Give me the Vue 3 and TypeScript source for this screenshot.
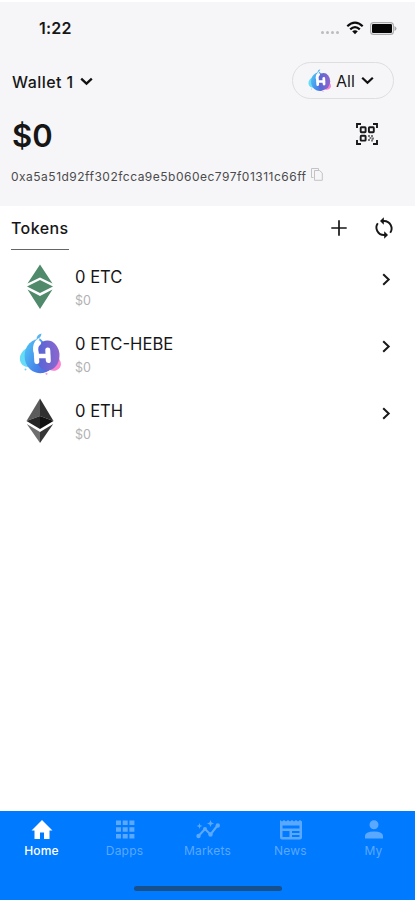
<script setup lang="ts">
import { ref } from 'vue'

interface Token {
  symbol: string
  balance: string
  value: string
  icon: 'etc' | 'hebe' | 'eth'
}

interface Tab {
  key: string
  label: string
}

const address = '0xa5a51d92ff302fcca9e5b060ec797f01311c66ff'

const tokens: Token[] = [
  { symbol: 'ETC', balance: '0', value: '$0', icon: 'etc' },
  { symbol: 'ETC-HEBE', balance: '0', value: '$0', icon: 'hebe' },
  { symbol: 'ETH', balance: '0', value: '$0', icon: 'eth' },
]

const tabs: Tab[] = [
  { key: 'home', label: 'Home' },
  { key: 'dapps', label: 'Dapps' },
  { key: 'markets', label: 'Markets' },
  { key: 'news', label: 'News' },
  { key: 'my', label: 'My' },
]

const active = ref('home')
</script>

<template>
  <div class="screen">
    <svg class="defs" width="0" height="0" aria-hidden="true">
      <defs>
        <linearGradient id="hebeBlue" x1="0" y1="0.3" x2="1" y2="0.8">
          <stop offset="0" stop-color="#4fbdf4" />
          <stop offset="0.5" stop-color="#4586ea" />
          <stop offset="1" stop-color="#5a55cf" />
        </linearGradient>
        <linearGradient id="hebePurple" x1="0" y1="0.5" x2="1" y2="0.5">
          <stop offset="0" stop-color="#4f66d8" />
          <stop offset="1" stop-color="#8d66cc" />
        </linearGradient>
        <symbol id="hebe" viewBox="0 0 42 42">
          <path d="M36 21C43 27 44 34 38 37C34 39 30 37 28 35Z" fill="#fb83d0" />
          <path d="M10 14C2 17 -1 25 2 30C5 35 11 34 14 34Z" fill="#66dcf6" />
          <path d="M21 5.500C9 7 4 17 6 27C8 36 15 41 24 40C33 38 39 31 38 22Z" fill="url(#hebeBlue)" />
          <ellipse cx="28.500" cy="22.500" rx="12" ry="15" fill="url(#hebePurple)" />
          <path d="M17.500 6.500Q17.500 1.500 22.500 .5Q22 5 17.500 6.500Z" fill="#58b4f0" />
          <circle cx="6.500" cy="36.500" r="1" fill="#77d4f4" />
          <circle cx="27.500" cy="40.800" r="1.100" fill="#f4a0dc" />
          <g fill="none" stroke="#fff" stroke-width="5" stroke-linecap="round">
            <path d="M19.500 10Q15.500 13 17.300 20L17.800 28.500" />
            <path d="M28.800 17L29.300 27.500" />
            <path d="M18 23H29" stroke-width="4.500" />
          </g>
          <path d="M20 6Q13.500 10 15.500 19" fill="none" stroke="#fff" stroke-width="1.800" />
        </symbol>
      </defs>
    </svg>

    <header class="header">
      <div class="status">
        <span class="clock">1:22</span>
        <span class="status-icons">
          <span class="signal"><i v-for="n in 4" :key="n"></i></span>
          <svg class="wifi" width="18" height="14" viewBox="0 0 18 14">
            <g fill="none" stroke="#0b0b0c" stroke-width="2.200">
              <path d="M1.300 5.200Q9 -2 16.700 5.200" />
              <path d="M4.200 8.400Q9 4 13.800 8.400" />
            </g>
            <path d="M6.200 10.200Q9 8.200 11.800 10.200L9 13.300Z" fill="#0b0b0c" />
          </svg>
          <svg class="battery" width="27" height="13" viewBox="0 0 27 13">
            <rect x=".6" y=".6" width="22.800" height="11.800" rx="3" fill="none" stroke="#aaaaac" stroke-width="1.100" />
            <rect x="2" y="2" width="20" height="9" rx="1.300" fill="#050505" />
            <path d="M24.500 4V9Q26.500 8 26.500 6.500T24.500 4Z" fill="#a6a6a8" />
          </svg>
        </span>
      </div>

      <div class="wallet-row">
        <button class="wallet">
          <span>Wallet 1</span>
          <svg width="13" height="9" viewBox="0 0 13 9"><path d="M1.200 1.700L6.500 6.700L11.800 1.700" fill="none" stroke="#111" stroke-width="2.300" /></svg>
        </button>
        <button class="network">
          <svg width="23" height="23"><use href="#hebe" /></svg>
          <span>All</span>
          <svg width="13" height="9" viewBox="0 0 13 9"><path d="M1.200 1.700L6.500 6.700L11.800 1.700" fill="none" stroke="#111" stroke-width="2.200" /></svg>
        </button>
      </div>

      <div class="balance-row">
        <strong class="balance">$0</strong>
        <svg class="scan" width="22" height="22" viewBox="0 0 22 22">
          <g fill="none" stroke="#19191b">
            <path d="M1 5V1H5M17 1H21V5M21 17V21H17M5 21H1V17" stroke-width="1.900" />
            <g stroke-width="1.900">
              <rect x="4.700" y="4.300" width="4.900" height="4.900" rx=".7" />
              <rect x="12.900" y="4.300" width="4.900" height="4.900" rx=".7" />
              <rect x="4.700" y="12.700" width="4.900" height="4.900" rx=".7" />
            </g>
          </g>
          <path d="M12 12h2v2h-2zM15 12h2v2h-2zM13.500 14h2v2h-2zM12 16h2v2h-2zM16 14.500h2v2h-2zM15 16.500h2v2h-2z" fill="#77777a" />
        </svg>
      </div>

      <div class="address-row">
        <span class="address">{{ address }}</span>
        <svg class="copy" width="12" height="13" viewBox="0 0 12 13">
          <g fill="none" stroke="#c3c3c6" stroke-width="1">
            <path d="M2.500 9.500H.5V.5H7.500V2.500" />
            <path d="M3.500 2.500H8.500L11.300 5V12.300H3.500Z" />
          </g>
        </svg>
      </div>
    </header>

    <main class="content">
      <div class="section-head">
        <h2 class="section-title">Tokens</h2>
        <div class="actions">
          <svg width="16" height="16" viewBox="0 0 16 16"><path d="M8 .3V15.700M.3 8H15.700" stroke="#161616" stroke-width="1.700" /></svg>
          <svg width="22" height="22" viewBox="0 0 22 22">
            <g fill="none" stroke="#161616" stroke-width="1.900">
              <path d="M9 4H11A7.500 7.500 0 0 1 17.200 15.800" />
              <path d="M13 18H11A7.500 7.500 0 0 1 4.800 6.200" />
            </g>
            <path d="M10.800 .3V7.700L7 4Z" fill="#161616" />
            <path d="M11.200 14.300V21.700L15 18Z" fill="#161616" />
          </svg>
        </div>
      </div>

      <ul class="tokens">
        <li v-for="token in tokens" :key="token.symbol" class="token">
          <span class="token-icon">
            <svg v-if="token.icon === 'etc'" width="28" height="46" viewBox="0 0 28 46">
              <g fill="#4f8a6b">
                <path d="M14 .5L26.500 19.500L14 13.500L1.500 19.500Z" />
                <path d="M14 16L27 22.500L14 29L1 22.500Z" />
                <path d="M1.500 25.500L14 32L26.500 25.500L14 45Z" />
              </g>
            </svg>
            <svg v-else-if="token.icon === 'hebe'" width="42" height="42"><use href="#hebe" /></svg>
            <svg v-else width="28" height="46" viewBox="0 0 28 46">
              <path d="M14 .5L.5 23L14 18Z" fill="#5c5c5c" />
              <path d="M14 .5L27.500 23L14 18Z" fill="#303030" />
              <path d="M14 18L.5 23L14 31Z" fill="#262626" />
              <path d="M14 18L27.500 23L14 31Z" fill="#111" />
              <path d="M.8 26L14 34V45Z" fill="#6e6e6e" />
              <path d="M27.200 26L14 34V45Z" fill="#363636" />
            </svg>
          </span>
          <span class="token-text">
            <span class="token-name">{{ token.balance }} {{ token.symbol }}</span>
            <span class="token-value">{{ token.value }}</span>
          </span>
          <svg class="chevron" width="9" height="13" viewBox="0 0 9 13"><path d="M1.200 1.200L6.700 6.500L1.200 11.800" fill="none" stroke="#191919" stroke-width="2" /></svg>
        </li>
      </ul>
    </main>

    <nav class="tabbar">
      <div class="tabs">
        <button v-for="tab in tabs" :key="tab.key" class="tab" :class="{ active: active === tab.key }" @click="active = tab.key">
          <svg width="26" height="24" viewBox="0 0 26 24" fill="currentColor">
            <path v-if="tab.key === 'home'" d="M11 22V15.500H15V22H20.500V13.500H23.500L13 3L2.500 13.500H5.500V22Z" />
            <path v-else-if="tab.key === 'dapps'" d="M4 3.500h5v4.500H4zM10.700 3.500h5v4.500h-5zM17.400 3.500h5v4.500h-5zM4 10.300h5V14.800H4zM10.700 10.300h5V14.800h-5zM17.400 10.300h5V14.800h-5zM4 17h5v4.500H4zM10.700 17h5v4.500h-5zM17.400 17h5v4.500h-5z" />
            <g v-else-if="tab.key === 'markets'">
              <path d="M3.500 19L10 12L15.500 17.500L22.500 8.500" fill="none" stroke="currentColor" stroke-width="2.100" />
              <circle cx="3.500" cy="19" r="2.200" /><circle cx="10" cy="12" r="2" />
              <circle cx="15.500" cy="17.500" r="2.200" /><circle cx="22.800" cy="8.500" r="2.200" />
              <path d="M4.500 6L5.300 8.200L7.500 9L5.300 9.800L4.500 12L3.700 9.800L1.500 9L3.700 8.200ZM15.500 3L16.500 5.500L19 6.500L16.500 7.500L15.500 10L14.500 7.500L12 6.500L14.500 5.500Z" />
            </g>
            <path v-else-if="tab.key === 'news'" fill-rule="evenodd" d="M2 3L4 4.500L6 3L8 4.500L10 3L12 4.500L14 3L16 4.500L18 3L20 4.500L22 3L24 4.500V20.500Q24 22.500 22 22.500H4Q2 22.500 2 20.500ZM4.500 8.500V11.500H21.500V8.500ZM4.500 14V20H11.500V14ZM14 14V16H21.500V14ZM14 18V20H21.500V18Z" />
            <path v-else d="M13 3.300A4.500 4.500 0 0 1 13 12.300A4.500 4.500 0 0 1 13 3.300ZM4 21.500V19Q4 14.500 13 14.500T22 19V21.500Z" />
          </svg>
          <span>{{ tab.label }}</span>
        </button>
      </div>
      <div class="home-indicator"></div>
    </nav>
  </div>
</template>

<style>
body {
  background: #fff;
}
</style>

<style scoped>
.screen {
  display: flex;
  flex-direction: column;
  width: 415px;
  height: 900px;
  padding-top: 2px;
  box-sizing: border-box;
  overflow: hidden;
  background: #fff;
  color: #161617;
  font-family: Inter, 'Liberation Sans', sans-serif;
}
.defs {
  position: absolute;
}
button {
  margin: 0;
  padding: 0;
  border: 0;
  background: none;
  color: inherit;
  font: inherit;
}
svg {
  display: block;
  flex: none;
}
.header {
  height: 204px;
  flex: none;
  background: #f6f6f8;
}
.status {
  display: flex;
  justify-content: space-between;
  align-items: center;
  height: 52px;
  padding: 0 18px 0 39px;
}
.clock {
  font-size: 16px;
  font-weight: 600;
  letter-spacing: 0.2px;
}
.status-icons {
  display: flex;
  align-items: center;
}
.signal {
  display: flex;
  gap: 2px;
  margin: 8px 7px 0 0;
}
.signal i {
  width: 3px;
  height: 3px;
  border-radius: 50%;
  background: #bcbcbf;
}
.battery {
  margin-left: 6px;
}
.wallet-row {
  display: flex;
  justify-content: space-between;
  align-items: center;
  height: 52px;
  padding: 0 21px 0 12px;
}
.wallet {
  display: flex;
  align-items: center;
  gap: 6px;
  padding-top: 3px;
  font-size: 16px;
  font-weight: 500;
  letter-spacing: 0.45px;
}
.network {
  display: flex;
  align-items: center;
  width: 102px;
  height: 37px;
  padding-left: 15px;
  border: 1px solid #dedee0;
  border-radius: 19px;
  box-sizing: border-box;
  font-size: 16px;
}
.network span {
  margin: 1px 6px 0 5px;
}
.balance-row {
  display: flex;
  justify-content: space-between;
  align-items: center;
  height: 60px;
  padding: 0 37px 0 12px;
}
.balance {
  font-size: 31px;
  font-weight: 600;
  line-height: 36px;
}
.scan {
  margin-top: -4px;
}
.address-row {
  display: flex;
  align-items: center;
  gap: 4px;
  height: 20px;
  padding-left: 11px;
  color: #4b4b4d;
  font-size: 12px;
  letter-spacing: 0.49px;
}
.copy {
  margin-bottom: 4px;
}
.content {
  flex: 1;
}
.section-head {
  display: flex;
  justify-content: space-between;
  height: 44px;
  padding: 0 20px 0 11px;
}
.section-title {
  height: 43px;
  margin: 0;
  border-bottom: 1px solid #656565;
  font-size: 16px;
  font-weight: 500;
  letter-spacing: 0.4px;
  line-height: 44px;
}
.actions {
  display: flex;
  align-items: center;
  gap: 26px;
}
.tokens {
  margin: 0;
  padding: 3px 0 0;
  list-style: none;
}
.token {
  display: flex;
  align-items: center;
  height: 67px;
  padding: 0 24px 0 18px;
}
.token-icon {
  display: flex;
  justify-content: center;
  width: 44px;
}
.token-text {
  display: flex;
  flex: 1;
  flex-direction: column;
  padding: 4px 0 0 13px;
}
.token-name {
  font-size: 16.6px;
  line-height: 24px;
}
.token-value {
  color: #b1b1b3;
  font-size: 12.500px;
  line-height: 23px;
}
.chevron {
  margin-bottom: 14px;
}
.tabbar {
  display: flex;
  flex-direction: column;
  height: 89px;
  align-items: center;
  background: #007aff;
}
.tabs {
  display: grid;
  grid-template-columns: repeat(5, 1fr);
  width: 100%;
  height: 75px;
}
.tab {
  display: flex;
  flex-direction: column;
  align-items: center;
  padding-top: 6px;
  color: #5aa8ff;
  font-size: 12px;
  letter-spacing: 0.2px;
  line-height: 16px;
}
.tab span {
  margin-top: 2px;
}
.active {
  color: #fff;
  font-weight: 500;
}
.home-indicator {
  width: 148px;
  height: 5px;
  border-radius: 3px;
  background: #17508b;
}
</style>
